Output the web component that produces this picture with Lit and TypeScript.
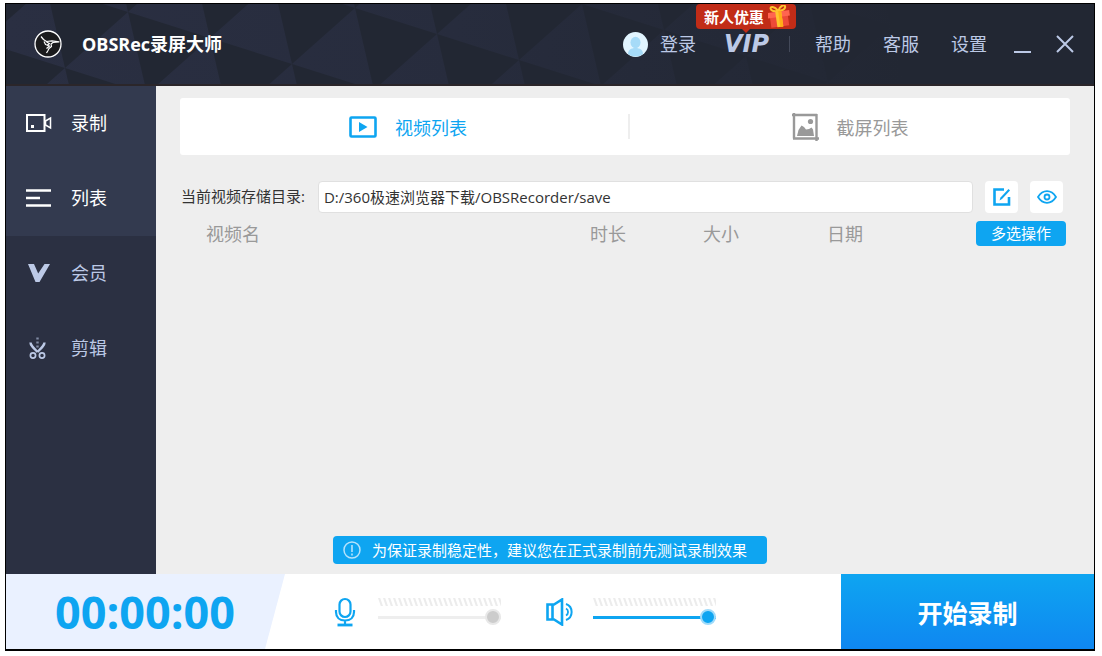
import { LitElement, html, css, svg } from "lit";
import { customElement, state } from "lit/decorators.js";

/** Faceted triangle texture of the title bar, fading out to the right. */
function facets() {
  const shapes = [];
  for (let i = -3; i < 14; i++) {
    for (let j = -5; j < 7; j++) {
      const x = 122 + i * 82 - j * 63;
      const y = 8 + i * 26 + j * 56;
      if (y > 82 || y < -84 || x < -90 || x > 900) continue;
      shapes.push(svg`<polygon points="${x},${y} ${x - 63},${y + 56} ${x + 19},${y + 82}" />`);
    }
  }
  return shapes;
}

@customElement("app-titlebar")
export class AppTitlebar extends LitElement {
  static styles = css`
    :host {
      display: grid;
      height: 80px;
      background: #222733;
      border-bottom: 2px solid #2b262a;
      overflow: hidden;
    }
    .backdrop {
      grid-area: 1 / 1;
      width: 100%;
      height: 80px;
    }
    .bar {
      grid-area: 1 / 1;
      z-index: 1;
      display: flex;
      align-items: center;
      padding: 0 20px 0 28px;
      min-width: 0;
    }
    .logo {
      width: 28px;
      height: 28px;
      margin-right: 20px;
    }
    .title {
      margin: 0;
      font-size: 18px;
      line-height: 24px;
      font-weight: 700;
      color: #fff;
      white-space: nowrap;
    }
    .menu {
      display: flex;
      align-items: center;
      gap: 32px;
      margin-left: auto;
    }
    .account {
      display: flex;
      align-items: center;
      gap: 28px;
      margin-right: -7px;
    }
    a,
    button {
      display: flex;
      align-items: center;
      padding: 0;
      border: 0;
      background: none;
      font: inherit;
      font-size: 18px;
      line-height: 24px;
      color: #bcc9e6;
      text-decoration: none;
      white-space: nowrap;
      cursor: pointer;
    }
    .login {
      gap: 12px;
    }
    .vip {
      position: relative;
      padding-right: 20px;
      border-right: 1px solid #434959;
      height: 16px;
      font-family: "DejaVu Sans", sans-serif;
      font-size: 24px;
      font-weight: 700;
      font-style: italic;
      line-height: 16px;
    }
    .promo {
      position: absolute;
      left: -28px;
      top: -32px;
      display: flex;
      align-items: center;
      gap: 4px;
      box-sizing: border-box;
      width: 100px;
      height: 25px;
      padding: 0 5px 0 8px;
      border-radius: 4px;
      background: #c12c17;
      color: #fff;
      font-family: "Noto Sans CJK SC", sans-serif;
      font-size: 15px;
      font-style: normal;
      line-height: 25px;
    }
    .promo::after {
      content: "";
      position: absolute;
      left: 46px;
      top: 25px;
      border: 4px solid transparent;
      border-top-color: #c12c17;
      border-bottom: 0;
    }
    .window {
      display: flex;
      gap: 25px;
      margin-left: -5px;
    }
  `;

  render() {
    return html`
      <svg class="backdrop" aria-hidden="true">
        <defs>
          <linearGradient id="fade" gradientUnits="userSpaceOnUse" x1="0" y1="0" x2="900" y2="0">
            <stop offset="0" stop-color="#2a2f42" />
            <stop offset=".5" stop-color="#272c3d" />
            <stop offset="1" stop-color="#222733" />
          </linearGradient>
        </defs>
        <g fill="url(#fade)">${facets()}</g>
      </svg>
      <div class="bar">
        <svg class="logo" viewBox="0 0 28 28" aria-hidden="true">
          <circle cx="14" cy="14" r="13" fill="#1b1b1d" stroke="#fff" stroke-width="1.3" />
          <path d="M7 6.500 9.500 9.500 12.500 11.500 18 10.800 25 11.800 19 12.500 17 14 17.500 16.500 15 18.500 14 20.500 12.500 23M10 11.500 11.500 14.500 15.500 16 12.500 18.500M12.500 12 15.500 13.500 13 15.500" fill="none" stroke="#fff" stroke-width="1.200" stroke-linejoin="round" />
        </svg>
        <h1 class="title">OBSRec录屏大师</h1>
        <nav class="menu">
          <div class="account">
            <a class="login" href="#login">
              <svg width="25" height="25" viewBox="0 0 25 25" aria-hidden="true">
                <clipPath id="face"><circle cx="12.500" cy="12.500" r="12" /></clipPath>
                <circle cx="12.500" cy="12.500" r="12.500" fill="#e2f5ff" />
                <g clip-path="url(#face)" fill="#a6dbf8">
                  <ellipse cx="12.500" cy="10.500" rx="5" ry="5.800" />
                  <path d="M5 22c0-4 3-6 7.500-6s7.500 2 7.500 6v3H5z" />
                </g>
              </svg>
              登录
            </a>
            <a class="vip" href="#vip">VIP
              <span class="promo">新人优惠
                <svg width="23" height="24" viewBox="0 0 23 24" aria-hidden="true">
                  <g transform="rotate(-8 11 12)">
                    <path d="M11 6C8 0 3 0 4 3c.5 2 4 3 7 3 3 0 7-1 7.500-3C19 0 14 0 11 6z" fill="none" stroke="#ffc52e" stroke-width="2" />
                    <path d="M2 11h18v10.500H2z" fill="#ee4a38" />
                    <path d="M0 6.500h22V12H0z" fill="#ff6550" />
                    <path d="M8 6h6v16H8z" fill="#ffc52e" />
                    <path d="M11 6h3v16h-3z" fill="#ffad16" />
                  </g>
                </svg>
              </span>
            </a>
          </div>
          <a href="#help">帮助</a>
          <a href="#service">客服</a>
          <a href="#settings">设置</a>
          <div class="window">
            <button aria-label="最小化">
              <svg width="17" height="18" viewBox="0 0 17 18"><path d="M0 17h17" stroke="#bcc9e6" stroke-width="2" /></svg>
            </button>
            <button aria-label="关闭">
              <svg width="18" height="18" viewBox="0 0 18 18"><path d="M1 1l16 16M17 1 1 17" stroke="#bcc9e6" stroke-width="2" /></svg>
            </button>
          </div>
        </nav>
      </div>
    `;
  }
}

@customElement("app-sidebar")
export class AppSidebar extends LitElement {
  static styles = css`
    :host {
      display: block;
      width: 150px;
      background: #2b3042;
    }
    .item {
      display: flex;
      align-items: center;
      gap: 19px;
      box-sizing: border-box;
      height: 75px;
      padding: 0 0 2px 20px;
      font-size: 18px;
      line-height: 24px;
      color: #bcc9e6;
      text-decoration: none;
    }
    .item.lit {
      background: #333a4f;
      color: #fff;
    }
    .item svg {
      width: 26px;
      height: 26px;
    }
  `;

  render() {
    const items = [
      {
        label: "录制",
        lit: true,
        icon: svg`<g fill="none" stroke="#fff"><path d="M1 5h17.500v16H1z" stroke-width="2" /><path d="M19.500 11l5-3v10l-5-3z" stroke-width="1.500" /></g><path d="M5 15h3v3H5z" fill="#fff" />`,
      },
      {
        label: "列表",
        lit: true,
        icon: svg`<path d="M0 5.500h25M0 13h14M0 20.500h25" stroke="#fff" stroke-width="2.600" />`,
      },
      {
        label: "会员",
        lit: false,
        icon: svg`<path d="M2 4h6l4.200 9.500L18.500 4H24L13.500 22H9.500z" fill="#bcc9e6" />`,
      },
      {
        label: "剪辑",
        lit: false,
        icon: svg`<g fill="none" stroke="#bcc9e6"><path d="M4.500 7.500c0 2.500 2 4.500 7 9.500M18.500 7.500c0 2.500-2 4.500-7 9.500" stroke-width="2.400" /><circle cx="7" cy="20.500" r="2.600" stroke-width="1.700" /><circle cx="16" cy="20.500" r="2.600" stroke-width="1.700" /><path d="M11.500 2.500v10" stroke-width="2.400" stroke-dasharray="2 2" opacity=".6" /></g>`,
      },
    ];
    return html`<nav>
      ${items.map(
        (item) => html`<a class="item ${item.lit ? "lit" : ""}" href="#${item.label}">
          <svg viewBox="0 0 26 26" aria-hidden="true">${item.icon}</svg>${item.label}
        </a>`,
      )}
    </nav>`;
  }
}

@customElement("app-library")
export class AppLibrary extends LitElement {
  static styles = css`
    :host {
      display: block;
      flex: 1;
      min-width: 0;
      padding: 12px 24px;
      background: #eee;
    }
    button {
      padding: 0;
      border: 0;
      font: inherit;
      cursor: pointer;
    }
    .tabs {
      display: flex;
      align-items: center;
      height: 57px;
      padding-left: 8px;
      border-radius: 3px;
      background: #fff;
    }
    .tab {
      flex: 1;
      display: flex;
      align-items: center;
      justify-content: center;
      gap: 18px;
      height: 57px;
      background: none;
      font-size: 18px;
      color: #999;
    }
    .tab.active {
      color: #0ea5f1;
    }
    .split {
      width: 2px;
      height: 25px;
      background: #eee;
    }
    .folder {
      display: flex;
      align-items: center;
      gap: 12px;
      margin-top: 26px;
      padding-right: 7px;
      font-size: 15px;
      line-height: 20px;
      color: #333;
    }
    .folder label {
      padding: 0 1px 2px;
      white-space: nowrap;
    }
    .path {
      flex: 1;
      min-width: 0;
      box-sizing: border-box;
      height: 32px;
      padding: 0 5px 1px;
      border: 1px solid #e0e0e0;
      border-radius: 4px;
      background: #fff;
      font: inherit;
      color: #333;
    }
    .square {
      display: grid;
      place-items: center;
      width: 33px;
      height: 32px;
      border-radius: 4px;
      background: #fff;
    }
    .list {
      width: 100%;
      margin-top: 8px;
      padding-right: 4px;
      box-sizing: border-box;
      border-spacing: 0;
      table-layout: fixed;
    }
    th {
      padding: 0;
      font-size: 18px;
      line-height: 24px;
      font-weight: inherit;
      text-align: left;
      color: #999;
    }
    .name {
      padding-left: 26px;
    }
    .length {
      width: 113px;
    }
    .size {
      width: 124px;
    }
    .date {
      width: 149px;
    }
    .action {
      width: 90px;
    }
    .multi {
      display: block;
      width: 100%;
      height: 25px;
      border-radius: 4px;
      background: #0ea5f1;
      font-size: 15px;
      line-height: 25px;
      color: #fff;
    }
  `;

  @state() private tab = "video";

  render() {
    return html`
      <div class="tabs" role="tablist">
        <button class="tab ${this.tab === "video" ? "active" : ""}" role="tab" aria-selected=${this.tab === "video"} @click=${() => (this.tab = "video")}>
          <svg width="28" height="22" viewBox="0 0 28 22" aria-hidden="true">
            <rect x="1.500" y="1.500" width="25" height="19" rx="1" fill="none" stroke="currentColor" stroke-width="2.600" />
            <path d="M10 6l8.500 5L10 16z" fill="currentColor" />
          </svg>
          视频列表
        </button>
        <span class="split"></span>
        <button class="tab ${this.tab === "shot" ? "active" : ""}" role="tab" aria-selected=${this.tab === "shot"} @click=${() => (this.tab = "shot")}>
          <svg width="27" height="28" viewBox="0 0 27 28" aria-hidden="true">
            <path d="M2 0v25.500M0 2h25M24.500 1v27M1 25.500h26" stroke="currentColor" stroke-width="2.400" />
            <circle cx="18.500" cy="8.500" r="2.600" fill="currentColor" />
            <path d="M5 23l1.500-6 3-4.500 2.500 1.500 2 2.500 3-.5 2.500-1.500 1.500 2 1 6.500z" fill="currentColor" />
          </svg>
          截屏列表
        </button>
      </div>
      <div class="folder">
        <label for="path">当前视频存储目录:</label>
        <input id="path" class="path" type="text" value="D:/360极速浏览器下载/OBSRecorder/save" />
        <button class="square" aria-label="更改目录">
          <svg width="18" height="18" viewBox="0 0 18 18"><path d="M11 1.500H1.500v15H16V9" fill="none" stroke="#0ea5f1" stroke-width="2.600" /><path d="M6.500 12.500l1-3L15.500 1l1.500 1.500L9 11z" fill="#0ea5f1" /></svg>
        </button>
        <button class="square" aria-label="打开目录">
          <svg width="20" height="14" viewBox="0 0 20 14"><g fill="none" stroke="#0ea5f1"><path d="M1 7c2.500-4 5.500-5.800 9-5.800S16.500 3 19 7c-2.500 4-5.500 5.800-9 5.800S3.500 11 1 7z" stroke-width="1.800" /><circle cx="10" cy="7" r="2.500" stroke-width="1.800" /></g></svg>
        </button>
      </div>
      <table class="list">
        <thead>
          <tr>
            <th class="name">视频名</th>
            <th class="length">时长</th>
            <th class="size">大小</th>
            <th class="date">日期</th>
            <th class="action"><button class="multi">多选操作</button></th>
          </tr>
        </thead>
        <tbody></tbody>
      </table>
    `;
  }
}

@customElement("app-recorder")
export class AppRecorder extends LitElement {
  static styles = css`
    :host {
      display: flex;
      height: 75px;
      background: #fff;
    }
    .timer {
      box-sizing: border-box;
      width: 279px;
      background: #eaf1ff;
      clip-path: polygon(0 0, 100% 0, 259px 100%, 0 100%);
      padding-left: 49px;
      font-size: 45px;
      line-height: 76px;
      font-weight: 700;
      color: #0ea5f1;
    }
    .levels {
      flex: 1;
      display: flex;
      align-items: center;
      gap: 45px;
      padding-left: 46px;
    }
    .level {
      display: flex;
      align-items: center;
      gap: 19px;
    }
    .meter {
      display: flex;
      flex-direction: column;
      gap: 3px;
      width: 123px;
    }
    .ticks {
      width: 100%;
      height: 8px;
    }
    .range {
      appearance: none;
      -webkit-appearance: none;
      display: block;
      width: 100%;
      height: 16px;
      margin: 0;
      background: linear-gradient(var(--track), var(--track)) center / 100% 3px no-repeat;
    }
    .range::-webkit-slider-thumb {
      -webkit-appearance: none;
      box-sizing: border-box;
      width: 16px;
      height: 16px;
      border: 2px solid var(--halo);
      border-radius: 8px;
      background: var(--knob);
    }
    .mic {
      --track: #eee;
      --halo: #e8e8e8;
      --knob: #ccc;
    }
    .speaker {
      --track: #0ea5f1;
      --halo: #9fdbfa;
      --knob: #0ea5f1;
    }
    .start {
      width: 253px;
      padding: 0;
      border: 0;
      background: linear-gradient(#0ea5f1, #0f87f1);
      font: inherit;
      font-size: 25px;
      font-weight: 700;
      color: #fff;
      cursor: pointer;
    }
  `;

  private ticks(id: string) {
    return html`<svg class="ticks" aria-hidden="true">
      <defs>
        <pattern id=${id} width="5" height="8" patternUnits="userSpaceOnUse">
          <path d="M0 0h2.200l2.800 8H2.800z" fill="#ececec" />
        </pattern>
      </defs>
      <rect width="100%" height="8" fill="url(#${id})" />
    </svg>`;
  }

  render() {
    return html`
      <div class="timer" role="timer">00:00:00</div>
      <div class="levels">
        <div class="level">
          <svg width="28" height="30" viewBox="0 0 28 30" aria-hidden="true">
            <g fill="none" stroke="#0ea5f1" stroke-width="2.200">
              <rect x="8.500" y="2" width="11" height="18" rx="5.500" />
              <path d="M5 13v2c0 5 3.500 8.500 9 8.500s9-3.500 9-8.500v-2M14 23.500v4" />
              <path d="M6.500 28h15" stroke-width="2.800" />
            </g>
          </svg>
          <div class="meter">
            ${this.ticks("mic-ticks")}
            <input class="range mic" type="range" min="0" max="100" value="100" aria-label="麦克风音量" />
          </div>
        </div>
        <div class="level">
          <svg width="28" height="28" viewBox="0 0 28 28" aria-hidden="true">
            <g fill="none" stroke="#0ea5f1">
              <path d="M1.500 6.500H8L16 1.500v25L8 21.500H1.500zM6.500 6.500v15" stroke-width="2.600" />
              <path d="M20 6a8.500 8.500 0 0 1 0 16" stroke-width="2" />
              <path d="M20 10.500a4 4 0 0 1 0 7" stroke-width="1.800" />
            </g>
          </svg>
          <div class="meter">
            ${this.ticks("speaker-ticks")}
            <input class="range speaker" type="range" min="0" max="100" value="100" aria-label="扬声器音量" />
          </div>
        </div>
      </div>
      <button class="start">开始录制</button>
    `;
  }
}

@customElement("app-root")
export class AppRoot extends LitElement {
  static styles = css`
    :host {
      display: block;
      box-sizing: border-box;
      height: 100vh;
      padding: 3px 7px 5px 5px;
      background: #fff;
      font-family: "Open Sans", "Noto Sans CJK SC", sans-serif;
    }
    .frame {
      position: relative;
      display: flex;
      flex-direction: column;
      box-sizing: border-box;
      height: 100%;
      border: 1px solid #000;
      border-bottom-width: 2px;
    }
    .body {
      flex: 1;
      display: flex;
      min-height: 0;
    }
    .toast {
      position: absolute;
      left: 50%;
      bottom: 85px;
      transform: translateX(-50%);
      display: flex;
      align-items: center;
      gap: 11px;
      height: 28px;
      padding: 0 20px 0 10px;
      border-radius: 4px;
      background: #0ea5f1;
      font-size: 15px;
      line-height: 28px;
      color: #fff;
      white-space: nowrap;
    }
  `;

  render() {
    return html`
      <div class="frame">
        <app-titlebar></app-titlebar>
        <div class="body">
          <app-sidebar></app-sidebar>
          <app-library></app-library>
        </div>
        <app-recorder></app-recorder>
        <div class="toast" role="status">
          <svg width="18" height="18" viewBox="0 0 18 18" aria-hidden="true">
            <circle cx="9" cy="9" r="8" fill="none" stroke="#b5e2fb" stroke-width="1.500" />
            <path d="M9 4v7M9 12.500v2" stroke="#b5e2fb" stroke-width="1.600" />
          </svg>
          为保证录制稳定性，建议您在正式录制前先测试录制效果
        </div>
      </div>
    `;
  }
}
